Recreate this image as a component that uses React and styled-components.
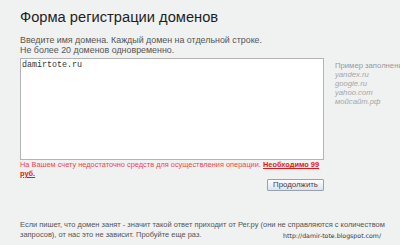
import React from "react";
import styled, { createGlobalStyle } from "styled-components";

const Global = createGlobalStyle`
  html, body { margin: 0; padding: 0; background: #f0f1f1; overflow: hidden; }
  body { font-family: "Liberation Sans", Arial, sans-serif; }
`;

const Page = styled.div`
  position: relative;
  box-sizing: border-box;
  padding: 9px 0 0 20px;
  width: 400px;
  height: 245px;
  overflow: hidden;
  display: flex;
  flex-direction: column;
`;

const Title = styled.h1`
  margin: 0;
  font-size: 14.7px;
  line-height: 17px;
  font-weight: normal;
  color: #1e1e1e;
`;

const Intro = styled.p`
  margin: 9px 0 0;
  font-size: 8.9px;
  line-height: 10px;
  color: #555;
`;

const FormRow = styled.div`
  display: flex;
  align-items: flex-start;
  margin-top: 3px;
`;

const Domains = styled.textarea`
  box-sizing: border-box;
  flex: none;
  width: 304px;
  height: 102px;
  margin: 0;
  padding: 1px 1px;
  border: 1px solid #b4b4b4;
  border-radius: 0;
  background: #fff;
  resize: none;
  font-family: "Liberation Mono", "Courier New", monospace;
  font-size: 8.33px;
  line-height: 10px;
  color: #333;
  outline: none;
`;

const Example = styled.div`
  flex: none;
  margin-left: 11px;
  padding-top: 2.5px;
  font-size: 7.7px;
  line-height: 9px;
  white-space: nowrap;
  color: #999;
`;

const ExampleItem = styled.div`
  font-style: italic;
  color: #a6a6a6;
`;

const Error = styled.div`
  width: 304px;
  font-size: 7.4px;
  line-height: 9px;
  color: #f2454f;
`;

const ErrorStrong = styled.span`
  font-weight: bold;
  text-decoration: underline;
  color: #e01818;
`;

const Actions = styled.div`
  width: 304px;
  display: flex;
  justify-content: flex-end;
  margin-top: 1px;
`;

const Button = styled.button`
  box-sizing: border-box;
  height: 12px;
  width: 57px;
  padding: 0;
  border: 1px solid #95a2b4;
  border-radius: 1px;
  background: linear-gradient(#fdfdfe, #dfe4ea);
  font-family: "Liberation Sans", Arial, sans-serif;
  font-size: 7.87px;
  line-height: 10px;
  color: #444;
`;

const Note = styled.p`
  margin: 28.5px 0 0;
  width: 372px;
  font-size: 7.47px;
  line-height: 10px;
  color: #555;
`;

const Watermark = styled.div`
  position: absolute;
  right: 19px;
  top: 232px;
  font-family: "DejaVu Sans", Verdana, sans-serif;
  font-size: 6.24px;
  line-height: 8px;
  color: #333;
`;

export default function App() {
  return (
    <>
      <Global />
      <Page>
        <Title>Форма регистрации доменов</Title>
        <Intro>
          Введите имя домена. Каждый домен на отдельной строке.
          <br />
          Не более 20 доменов одновременно.
        </Intro>
        <FormRow>
          <Domains defaultValue="damirtote.ru" />
          <Example>
            Пример заполнения:
            <ExampleItem>yandex.ru</ExampleItem>
            <ExampleItem>google.ru</ExampleItem>
            <ExampleItem>yahoo.com</ExampleItem>
            <ExampleItem>мойсайт.рф</ExampleItem>
          </Example>
        </FormRow>
        <Error>
          На Вашем счету недостаточно средств для осуществления операции.{" "}
          <ErrorStrong>Необходимо 99 руб.</ErrorStrong>
        </Error>
        <Actions>
          <Button>Продолжить</Button>
        </Actions>
        <Note>
          Если пишет, что домен занят - значит такой ответ приходит от Рег.ру
          (они не справляются с количеством запросов), от нас это не зависит.
          Пробуйте еще раз.
        </Note>
        <Watermark>http://damir-tote.blogspot.com/</Watermark>
      </Page>
    </>
  );
}
